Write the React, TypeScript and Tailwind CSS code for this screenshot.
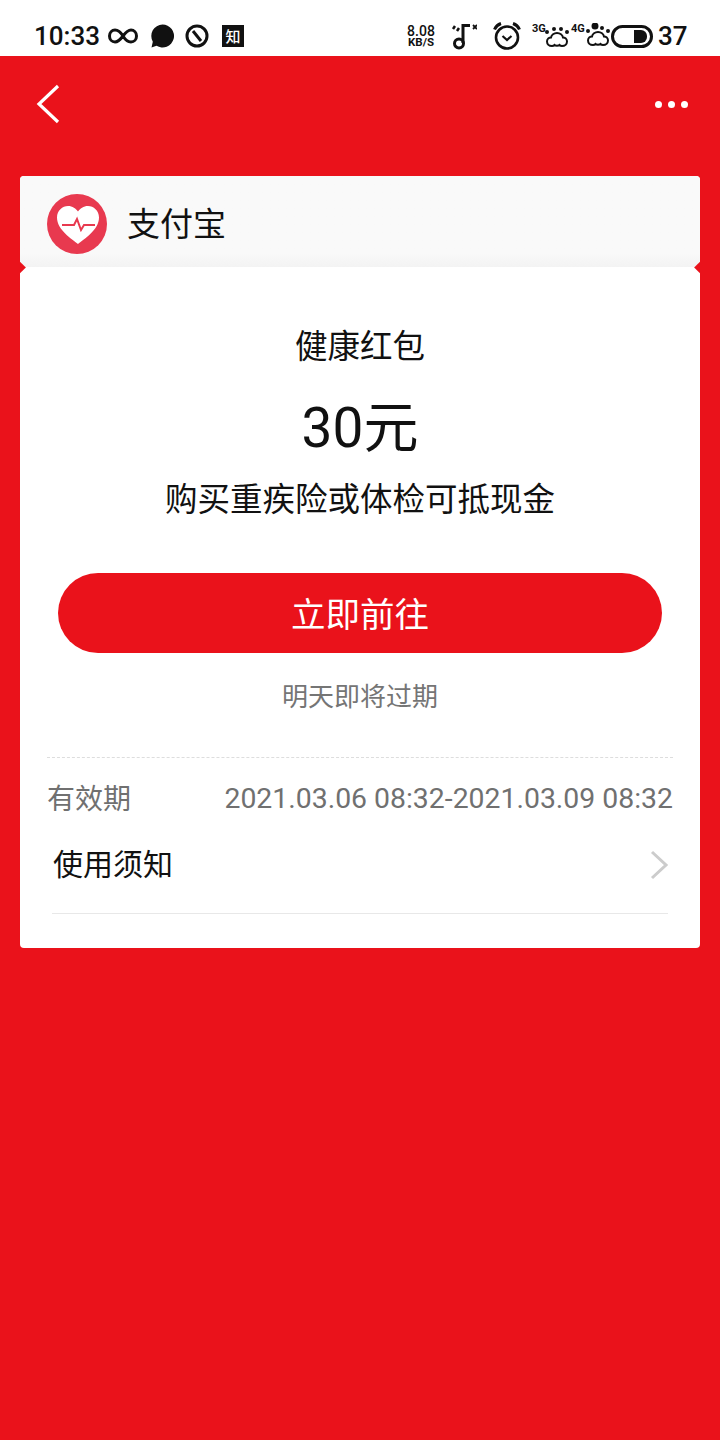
const cjk = { fontFamily: '"Noto Sans CJK SC", Roboto, sans-serif' };
const roboto = { fontFamily: 'Roboto, sans-serif' };

function StatusBar() {
  return (
    <div className="h-14 bg-white flex items-center pl-[34px] pr-[33px] pt-4 text-[#111] shrink-0" style={roboto}>
      <span className="text-[26px] font-medium leading-none w-[65px]">10:33</span>
      <svg className="ml-[9px]" width="30" height="18" viewBox="0 0 30 18" fill="none" stroke="#111" strokeWidth="3">
        <path d="M15 9C12 4 9 3 7 3 4 3 1.500 5.500 1.500 9s2.500 6 5.500 6c3 0 5-2 8-6 3-4 5-6 8-6 3 0 5.500 2.500 5.500 6s-2.500 6-5.500 6c-2 0-5-1-8-6z" />
      </svg>
      <svg className="ml-[12px]" width="24" height="24" viewBox="0 0 24 24" fill="#111">
        <path d="M12.500 .5a11.500 11.500 0 1 1-6 21.300L1.500 23.500l1.300-5.800A11.500 11.500 0 0 1 12.500 .5z" />
      </svg>
      <svg className="ml-[11px]" width="24" height="24" viewBox="0 0 24 24" fill="none" stroke="#111" strokeWidth="3">
        <circle cx="12" cy="12" r="10" />
        <path d="M8 7l8 10" />
      </svg>
      <span className="ml-[13px] w-[22px] h-[22px] bg-[#111] text-white text-[15px] leading-[21px] text-center font-medium" style={cjk}>知</span>
      <div className="ml-auto flex items-center">
        <div className="w-[30px] text-center font-medium">
          <div className="text-[14px] leading-[12px]">8.08</div>
          <div className="text-[11.500px] leading-[10px] font-bold">KB/S</div>
        </div>
        <svg className="ml-[15px]" width="26" height="28" viewBox="0 0 26 28" fill="none" stroke="#111">
          <circle cx="8" cy="21.500" r="4.500" strokeWidth="3" />
          <path d="M12 21V3.500h7" strokeWidth="3" />
          <path d="M2 7l2-3M6 9l2-3" strokeWidth="2.500" />
          <path d="M22 3l4 4M26 3l-4 4" strokeWidth="1.800" />
        </svg>
        <svg className="ml-[16px]" width="28" height="28" viewBox="0 0 28 28" fill="none" stroke="#111">
          <circle cx="14" cy="15.500" r="11" strokeWidth="2.600" />
          <path d="M9.500 14l4.500 4 4.500-4" strokeWidth="2.200" />
          <path d="M1.500 7.500C3 4 5 2.500 8 1.500M26.500 7.500C25 4 23 2.500 20 1.500" strokeWidth="3" />
        </svg>
        <div className="ml-[11px] relative w-[38px] h-[28px]">
          <span className="absolute left-0 top-0 text-[11px] font-bold leading-[14px]">3G</span>
          <svg className="absolute left-[13px] top-[4px]" width="24" height="22" viewBox="0 0 24 22" fill="none" stroke="#111" strokeWidth="2">
            <path d="M7 20c-3 0-5-2-5-4.500S4 11.500 6 11.500C6.500 9 9 7 12 7s5.500 2 6 4.500c2 0 4 1.500 4 4S20 20 17 20c-1 0-2-.5-2.500-1-1 1-4 1-5 0-.5.5-1.500 1-2.500 1z" />
            <circle cx="2" cy="6" r="1" fill="#111" />
            <circle cx="9" cy="3" r="1" fill="#111" />
            <circle cx="16" cy="3" r="1" fill="#111" />
            <circle cx="22" cy="6" r="1" fill="#111" />
          </svg>
        </div>
        <div className="relative w-[38px] h-[28px]">
          <span className="absolute left-[1px] top-0 text-[11px] font-bold leading-[14px]">4G</span>
          <svg className="absolute left-[16px] top-[1px]" width="24" height="24" viewBox="0 0 24 24" fill="none" stroke="#111" strokeWidth="2">
            <path d="M7 22c-3 0-5-2-5-4.500S4 13.500 6 13.500C6.500 11 9 9 12 9s5.500 2 6 4.500c2 0 4 1.500 4 4S20 22 17 22c-1 0-2-.5-2.500-1-1 1-4 1-5 0-.5.5-1.500 1-2.500 1z" />
            <circle cx="2" cy="8" r="1" fill="#111" />
            <circle cx="9" cy="3" r="2.500" fill="#111" />
            <circle cx="16" cy="5" r="1" fill="#111" />
            <circle cx="22" cy="8" r="1" fill="#111" />
          </svg>
        </div>
        <div className="ml-[3px] relative w-[42px] h-[23px] rounded-full border-[3px] border-[#111]">
          <div className="absolute right-[3px] top-[2px] w-[13px] h-[13px] bg-[#111] rounded-r-[6px]" />
        </div>
        <span className="ml-[5px] text-[26px] font-medium leading-none w-[29px]">37</span>
      </div>
    </div>
  );
}

function HeartLogo() {
  return (
    <svg className="mt-[5px]" width="60" height="60" viewBox="0 0 60 60">
      <circle cx="30" cy="30" r="30" fill="#E8394F" />
      <path d="M31 50C25 45 10 36 10 23.500 10 16.500 15.500 12 21 12c4.500 0 8 2.500 10 5.500 2-3 5.500-5.500 10-5.500 5.500 0 11 4.500 11 11.500C52 36 37 45 31 50z" fill="#fff" />
      <path d="M15 31h12l3-6 4 11 3-5h11" fill="none" stroke="#E8394F" strokeWidth="2" />
    </svg>
  );
}

export default function App() {
  return (
    <div className="w-[720px] h-[1440px] bg-[#EA121B] flex flex-col overflow-hidden" style={cjk}>
      <StatusBar />
      <div className="h-[96px] shrink-0 flex items-center justify-between pl-[36px] pr-[32px]">
        <svg width="24" height="40" viewBox="0 0 24 40" fill="none" stroke="#fff" strokeWidth="3.200">
          <path d="M22 2L3 20l19 18" />
        </svg>
        <div className="flex gap-[6px]">
          <span className="w-[7px] h-[7px] rounded-full bg-white" />
          <span className="w-[7px] h-[7px] rounded-full bg-white" />
          <span className="w-[7px] h-[7px] rounded-full bg-white" />
        </div>
      </div>
      <div className="mx-[20px] mt-[24px] h-[772px] rounded-[4px] bg-white overflow-hidden flex flex-col relative">
        <div className="h-[91px] shrink-0 bg-gradient-to-b from-[#F9F9F9] from-85% to-[#F3F3F3] flex items-center pl-[27px]">
          <HeartLogo />
          <span className="ml-[20px] mt-[2px] text-[33px] leading-none text-[#111]">支付宝</span>
        </div>
        <span className="absolute left-[-5px] top-[87px] w-[9px] h-[9px] rotate-45 bg-[#EA121B]" />
        <span className="absolute right-[-5px] top-[87px] w-[9px] h-[9px] rotate-45 bg-[#EA121B]" />
        <div className="flex flex-col items-center">
          <div className="mt-[57px] text-[32.500px] leading-[40px] text-[#111]">健康红包</div>
          <div className="mt-[24px] text-[55px] leading-[70px] text-[#111]">
            <span style={roboto}>30</span>元
          </div>
          <div className="mt-[14px] text-[32.500px] leading-[40px] text-[#111]">购买重疾险或体检可抵现金</div>
          <div className="mt-[56px] w-[604px] h-[80px] rounded-full bg-[#EA121B] text-white text-[34.500px] leading-[40px] pb-[2px] flex items-center justify-center">立即前往</div>
          <div className="mt-[22px] text-[26px] leading-[40px] text-[#757575]">明天即将过期</div>
        </div>
        <div className="mx-[27px] mt-[42px] border-t border-dashed border-[#DDD]" />
        <div className="mx-[28px] mt-[21px] flex items-center justify-between text-[#707070] h-[40px]">
          <span className="text-[28px] ml-[-1px] mb-[4px]">有效期</span>
          <span className="text-[28.400px] mr-[-1px]" style={roboto}>2021.03.06 08:32-2021.03.09 08:32</span>
        </div>
        <div className="mx-[32px] flex items-center justify-between h-[95px] border-b border-[#E8E8E8] pb-[8px]">
          <span className="text-[30px] leading-[40px] text-[#111] ml-[1px]">使用须知</span>
          <svg className="mr-[-1px] mt-[6px]" width="20" height="30" viewBox="0 0 20 30" fill="none" stroke="#CCC" strokeWidth="3">
            <path d="M3 2l14 13L3 28" />
          </svg>
        </div>
      </div>
    </div>
  );
}
